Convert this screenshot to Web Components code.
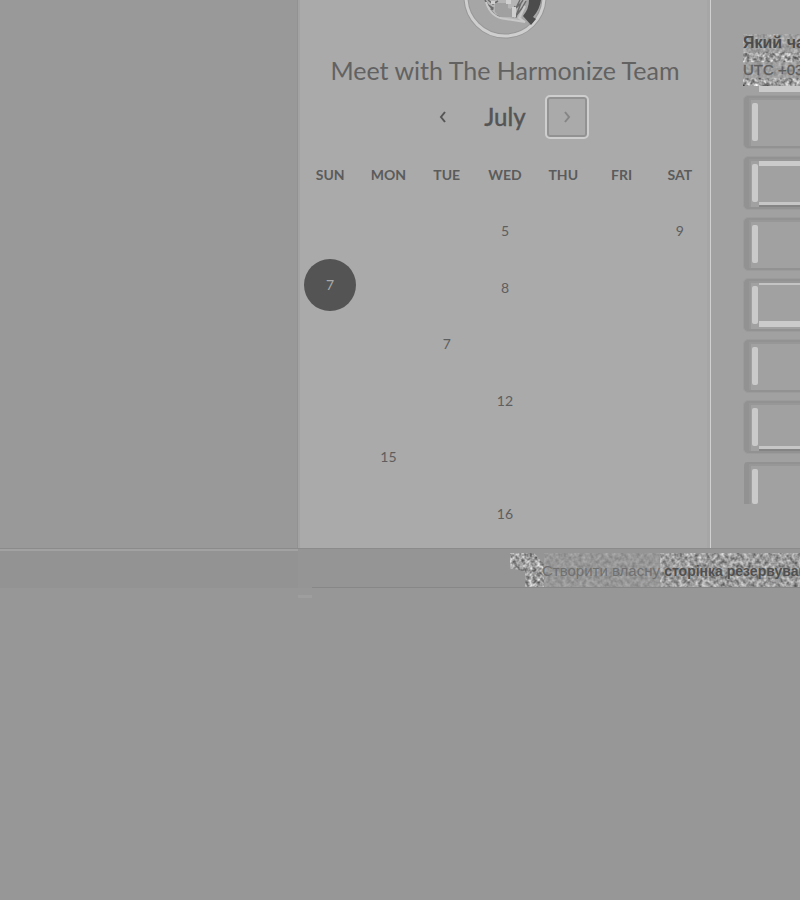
<!DOCTYPE html>
<html lang="uk">
<head>
<meta charset="utf-8">
<title>Meet with The Harmonize Team</title>
<style>
body{margin:0;min-height:100vh;background:#979797;font-family:Lato,"Open Sans",sans-serif;color:#5c5c5c;overflow-x:hidden}
</style>
</head>
<body>
<booking-page></booking-page>
<script>
const define=(name,html,init)=>customElements.define(name,class extends HTMLElement{
  connectedCallback(){
    if(this.shadowRoot)return;
    const t=document.createElement('template');
    t.innerHTML=html;
    this.attachShadow({mode:'open'}).append(t.content.cloneNode(true));
    if(init)init.call(this,this.shadowRoot);
  }
});

define('grain-texture',`
<style>:host{display:block;overflow:hidden}svg{display:block;width:100%;height:100%}</style>
<svg aria-hidden="true"><filter id="g" x="0" y="0" width="100%" height="100%" color-interpolation-filters="sRGB">
<feTurbulence type="fractalNoise" baseFrequency=".26" numOctaves="2" seed="7"/>
<feColorMatrix values="1 0 0 0 .12  1 0 0 0 .12  1 0 0 0 .12  0 0 0 0 1"/></filter>
<rect width="100%" height="100%" filter="url(#g)"/></svg>`);

define('team-avatar',`
<style>:host{display:block;height:40px;overflow:hidden}svg{display:block;margin:0 auto}</style>
<svg width="84" height="40" viewBox="0 0 84 40" aria-hidden="true">
<circle cx="42" cy="-3" r="39" fill="#a6a6a6" stroke="#989898" stroke-width="5"/>
<circle cx="42" cy="-3" r="39" fill="none" stroke="#cfcfcf" stroke-width="3"/>
<path d="M22 0Q25 16 41 18L58 21L63 0Z" fill="#b5b5b5"/>
<path d="M22 0l3 5 5 3-3 2 5 5 5 2M25 0l5 4 5-3M30 10l-3-4M57 0l-4 8 5-5 2-3M58 3l-5 13 6-8 4-7M52 6l-3 9 5 2" fill="none" stroke="#6c6c6c" stroke-width="1.5"/>
<path d="M32 3h13v5l3 1v8H37l-5-5zM48 8h4l-1 10-4-1z" fill="#a0a0a0"/>
<path d="M49 7h4v10h-4zM43 0h5v4h-5zM28 1h4v3h-4z" fill="#d0d0d0"/>
<path d="M23 2Q28 18 43 19L62 22L56 18L62 6" fill="none" stroke="#c8c8c8" stroke-width="2"/>
<path d="M66 0H78Q77 9 70 17L73 19L68 25L60 16Q66 9 66 0Z" fill="#4c4c4c"/>
</svg>`);

define('month-nav',`
<style>
:host{display:grid;grid-template-columns:44px 80px 44px;align-items:center;justify-content:center;height:44px}
button{box-sizing:border-box;width:44px;height:44px;padding:0;border:2px solid transparent;border-radius:5px;background:none;color:#555;display:grid;place-items:center}
.next{border-color:#cecece;box-shadow:inset 0 0 0 2px #929292;color:#858585}
h2{margin:0;text-align:center;font-size:24px;line-height:32px;font-weight:500;color:#555;-webkit-text-stroke:.3px #555}
svg{fill:none;stroke:currentColor;stroke-width:2}
</style>
<button aria-label="Previous month"><svg width="8" height="12" viewBox="0 0 8 12"><path d="M6 1L2 6L6 11"/></svg></button>
<h2>July</h2>
<button class="next" aria-label="Next month"><svg width="8" height="12" viewBox="0 0 8 12"><path d="M2 1L6 6L2 11"/></svg></button>`);

define('month-grid',`
<style>
:host{display:block}
table{width:100%;border-collapse:collapse;table-layout:fixed;text-align:center}
th{padding:0;height:28px;font-size:14px;font-weight:700;line-height:20px;color:#5b5b5b}
thead::after{content:"";display:table-row;height:14px}
td{padding:0;height:56px}
tr:nth-child(even) td{height:57px}
button{font:14px/20px Lato,sans-serif;color:#5e5e5e;background:none;border:0;border-radius:50%;padding:0;width:52px;height:52px;vertical-align:middle}
td.top{vertical-align:top}
.on{background:#545454;color:#aaa}
</style>
<table><thead><tr></tr></thead><tbody></tbody></table>`,function(r){
  r.querySelector('thead tr').innerHTML=['SUN','MON','TUE','WED','THU','FRI','SAT'].map(d=>`<th scope="col">${d}</th>`).join('');
  const rows=[{3:5,6:9},{0:7,3:8},{2:7},{3:12},{1:15},{3:16}];
  r.querySelector('tbody').innerHTML=rows.map((w,i)=>'<tr>'+[0,1,2,3,4,5,6].map(c=>{
    const on=i===1&&c===0;
    return `<td${on?' class="top"':''}>${w[c]?`<button${on?' class="on" aria-pressed="true"':''}>${w[c]}</button>`:''}</td>`;
  }).join('')+'</tr>').join('');
});

define('booking-card',`
<style>
:host{display:block;box-sizing:border-box;background:#aaa;border-left:2px solid #a3a3a3;border-right:1px solid #d0d0d0;padding:0 1px 6px;box-shadow:inset -3px 0 #a6a6a6}
h1{margin:12px 0 7px;text-align:center;font-size:25px;line-height:36px;font-weight:400;color:#626262;white-space:nowrap}
month-grid{margin-top:22px}
</style>
<team-avatar></team-avatar><h1><slot></slot></h1><month-nav></month-nav><month-grid></month-grid>`);

define('time-slot',`
<style>
:host{display:block;height:52px}
button{box-sizing:border-box;display:flex;width:100%;height:100%;padding:5px 0 5px 3px;border:solid #929292;border-width:2px 0 2px 5px;border-radius:4px 0 0 4px;outline:1px solid #9b9b9b;background:#a1a1a1;gap:1px;box-shadow:inset 2px 2px #979797}
i{flex:none;width:6px;background:#cacaca;border-radius:2px}
span{flex:1;box-sizing:border-box;margin:-3px 0}
:host([mark~=top]) span{border-top:5px solid #cbcbcb}
:host([mark~=topline]) span{border-top:2px solid #c4c4c4}
:host([mark~=bottom]) span{border-bottom:6px solid #cbcbcb}
:host([mark~=line]) span{border-bottom:3px solid #c6c6c6;box-shadow:0 2px #848484}
:host([mark~=open]){height:42px}
:host([mark~=open]) button{border-bottom:0;border-radius:4px 0 0 0;outline:0;padding-bottom:0}
</style>
<button aria-label="Time slot"><i></i><span></span></button>`);

define('time-panel',`
<style>
:host{display:block;overflow:hidden;background:#a1a1a1;font-family:"Liberation Sans",Arial,sans-serif;padding:34px 0 0 32px;box-sizing:border-box;min-width:0}
header{display:grid;height:52px;overflow:hidden}
grain-texture,.copy{grid-area:1/1}
grain-texture{height:52px}
.copy{z-index:1;white-space:nowrap}
h3,p{margin:0;font-size:16px;line-height:18px}
h3{background:#a1a1a199;color:#4c4c4c}
p{margin-top:10px;font-size:15px;line-height:16px;background:#a1a1a1aa;color:#5e5e5e;-webkit-text-stroke:.3px #5e5e5e}
hr{border:0;height:6px;margin:0 0 4px 16px;background:#cacaca}
section{display:grid;gap:9px;padding-left:1px}
</style>
<header><grain-texture></grain-texture><div class="copy"><h3>Який час</h3><p>UTC +03</p></div></header><hr>
<section><time-slot></time-slot><time-slot mark="top line"></time-slot><time-slot></time-slot><time-slot mark="topline bottom"></time-slot><time-slot></time-slot><time-slot mark="line"></time-slot><time-slot mark="open"></time-slot></section>`);

define('booking-footer',`
<style>
:host{display:grid;grid-template-columns:minmax(0,1fr) 502px;border-top:1px solid #8b8b8b;background:#959595;font-family:"Liberation Sans",Arial,sans-serif}
.left{border-top:2px solid #a2a2a2;background:#939393}
.bar{display:flex;height:38px;border-bottom:1px solid #878787;padding-left:198px;margin-left:14px;overflow:hidden}
.credit{display:grid;flex:1;min-width:0;padding-top:4px}
.noise{grid-area:1/1;display:flex;height:34px}
.noise grain-texture:nth-child(1){width:34px;clip-path:polygon(0 0,70% 0,100% 30%,100% 100%,45% 100%,45% 55%,0 45%)}
.noise grain-texture:nth-child(2){width:116px;opacity:.25}
.noise grain-texture:nth-child(3){flex:1;opacity:.75}
a{grid-area:1/1;z-index:1;margin-left:32px;align-self:start;margin-top:9px;font-size:15px;line-height:18px;white-space:nowrap;text-decoration:none;color:#707070}
b{font-size:14px;color:#505050;text-shadow:0 0 2px #a0a0a0}
</style>
<div class="left"></div><div class="bar"><div class="credit"><div class="noise"><grain-texture></grain-texture><grain-texture></grain-texture><grain-texture></grain-texture></div><a href="#">Створити власну <b>сторінка резервування</b></a></div></div>`);

define('booking-page',`
<style>
:host{display:block}
main{display:grid;grid-template-columns:minmax(0,1fr) 413px 89px}
.space{background:#999;border-right:1px solid #929292}
.tail{margin-left:calc(100% - 502px);width:14px;height:7px;border-bottom:3px solid #9e9e9e}
</style>
<main><div class="space"></div><booking-card>Meet with The Harmonize Team</booking-card><time-panel></time-panel></main>
<booking-footer></booking-footer><div class="tail"></div>`);
</script>
</body>
</html>
